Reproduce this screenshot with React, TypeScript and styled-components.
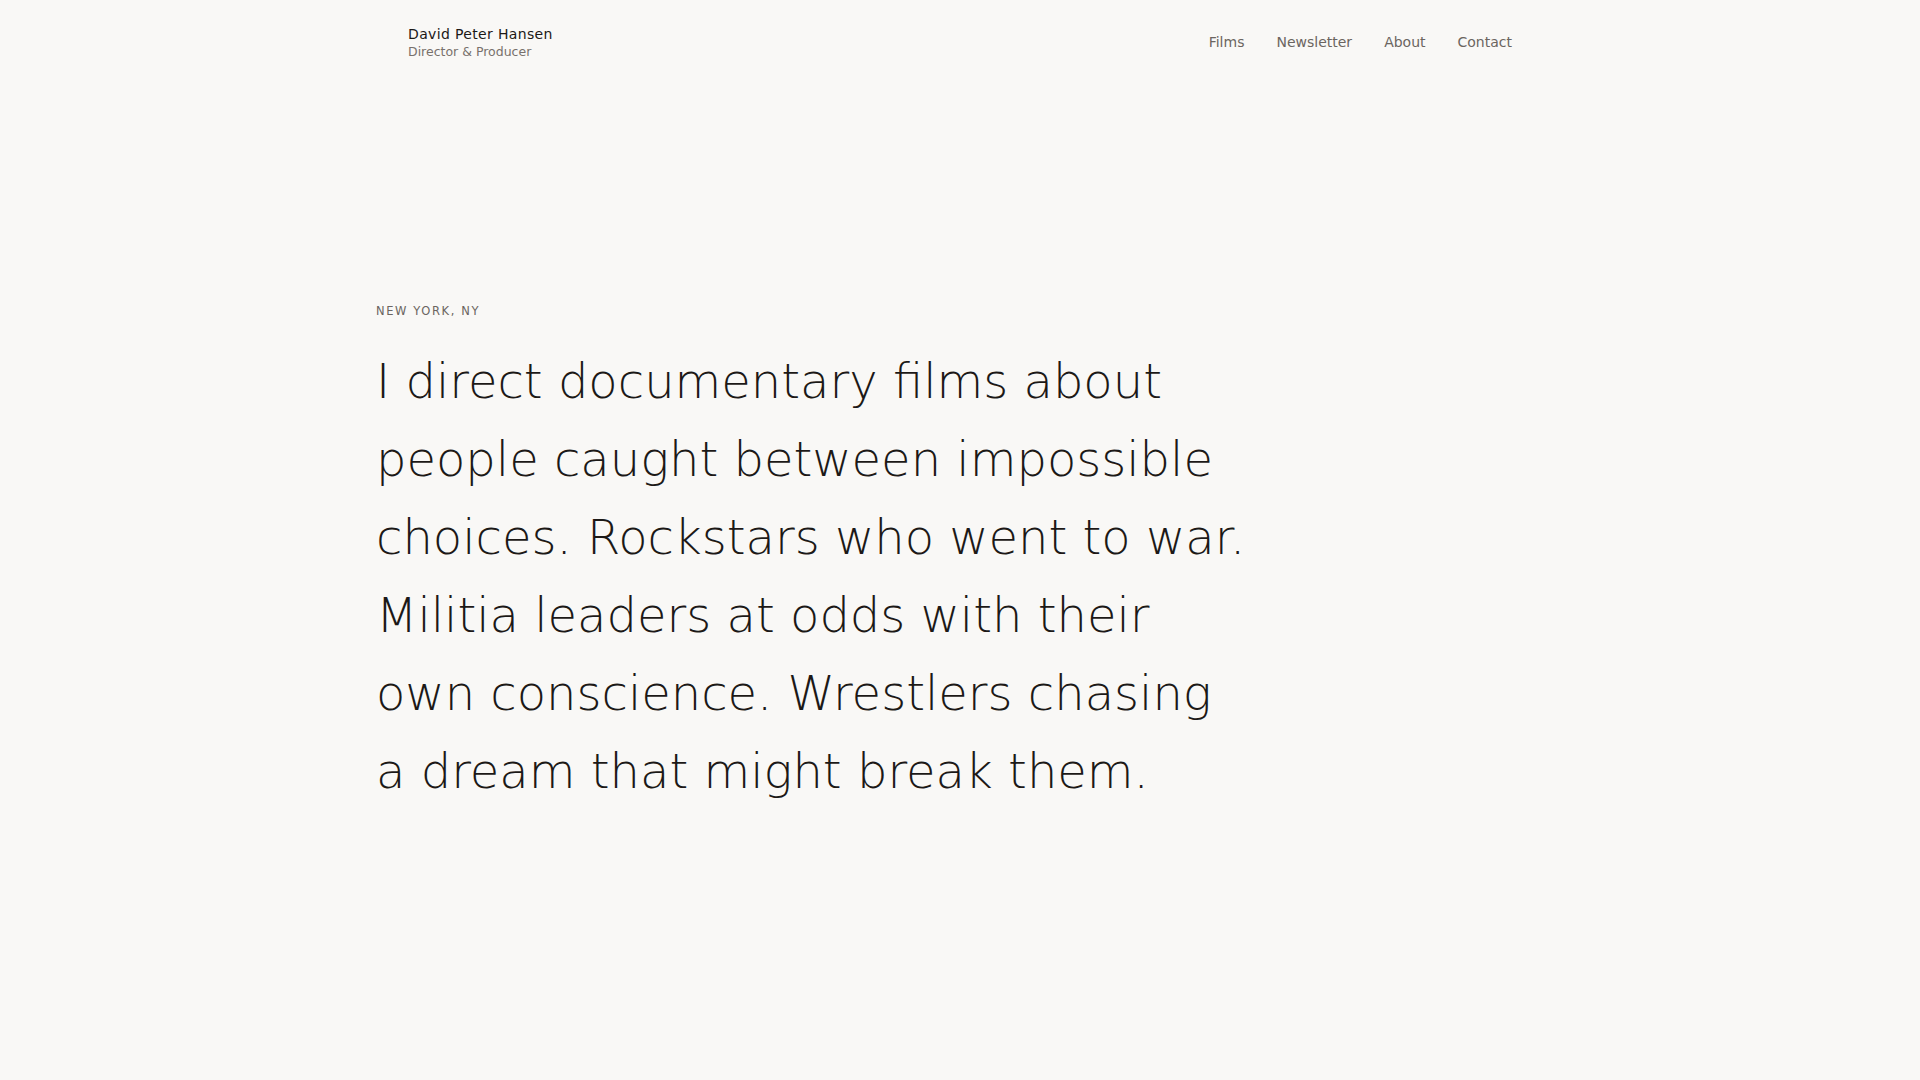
import React from "react";
import styled, { createGlobalStyle } from "styled-components";

const Global = createGlobalStyle`
  html, body { margin: 0; padding: 0; background: #f9f8f6; }
  body { font-family: "DejaVu Sans", sans-serif; color: #1c1917; }
  * { box-sizing: border-box; }
`;

const Page = styled.div`
  min-height: 1080px;
  background: #f9f8f6;
`;

const Container = styled.div`
  width: 1168px;
  margin: 0 auto;
`;

const Header = styled.header`
  display: flex;
  align-items: center;
  justify-content: space-between;
  padding: 0 32px;
  height: 84px;
`;

const Brand = styled.a`
  display: flex;
  flex-direction: column;
  text-decoration: none;
  gap: 1px;
  padding-top: 1px;
`;

const Name = styled.span`
  font-size: 14px;
  color: #1c1917;
  letter-spacing: 0.35px;
  line-height: 17px;
`;

const Role = styled.span`
  font-size: 12.5px;
  color: #78716c;
  line-height: 15px;
`;

const Nav = styled.nav`
  display: flex;
  gap: 32px;
`;

const NavLink = styled.a`
  font-size: 14px;
  color: #6b6560;
  text-decoration: none;
`;

const Hero = styled.section`
  padding: 220px 0 0 0;
`;

const Location = styled.p`
  margin: 0 0 24px 0;
  font-size: 11.5px;
  letter-spacing: 1.6px;
  color: #6b6560;
  text-transform: uppercase;
`;

const Statement = styled.h1`
  margin: 0;
  max-width: 876px;
  font-family: "DejaVu Sans ExtraLight", "DejaVu Sans", sans-serif;
  font-weight: 200;
  font-size: 48px;
  line-height: 78px;
  letter-spacing: 0;
  color: #1c1917;
`;

export default function App() {
  return (
    <Page>
      <Global />
      <Container>
        <Header>
          <Brand href="#">
            <Name>David Peter Hansen</Name>
            <Role>Director &amp; Producer</Role>
          </Brand>
          <Nav>
            <NavLink href="#">Films</NavLink>
            <NavLink href="#">Newsletter</NavLink>
            <NavLink href="#">About</NavLink>
            <NavLink href="#">Contact</NavLink>
          </Nav>
        </Header>
        <Hero>
          <Location>New York, NY</Location>
          <Statement>
            I direct documentary films about people caught between impossible
            choices. Rockstars who went to war. Militia leaders at odds with
            their own conscience. Wrestlers chasing a dream that might break
            them.
          </Statement>
        </Hero>
      </Container>
    </Page>
  );
}
